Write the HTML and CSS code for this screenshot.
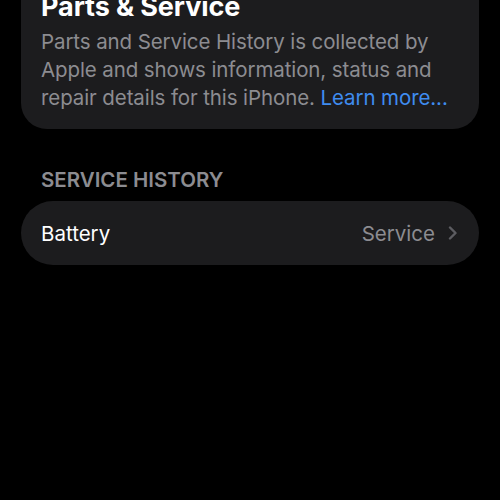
FILE: index.html
```
<!DOCTYPE html>
<html>
<head>
<meta charset="utf-8">
<link rel="stylesheet" href="styles.css">
</head>
<body>
<main class="page">
  <section class="card intro">
    <h1 class="title">Parts &amp; Service</h1>
    <p class="desc">Parts and Service History is collected by Apple and shows information, status and repair details for this iPhone. <span class="link">Learn more...</span></p>
  </section>
  <h2 class="section-header">SERVICE HISTORY</h2>
  <section class="card list">
    <div class="row">
      <span class="row-label">Battery</span>
      <span class="row-value">Service</span>
      <svg class="chevron" width="10" height="14" viewBox="0 0 10 14"><path d="M2 1.5 L7.5 7 L2 12.5" fill="none" stroke="#5c5c61" stroke-width="2.4" stroke-linecap="round" stroke-linejoin="round"/></svg>
    </div>
  </section>
</main>
</body>
</html>
```
FILE: styles.css
```
html, body {
  margin: 0;
  padding: 0;
  background: #000;
  height: 100%;
}
body {
  font-family: Inter, "Liberation Sans", sans-serif;
  color: #fff;
  overflow: hidden;
}
.page {
  padding: 0 21px;
}
.card {
  background: #1c1c1e;
  border-radius: 26px;
}
.intro {
  margin-top: -40px;
  padding: 32px 20px 17px 20px;
}
.title {
  margin: 0;
  font-size: 27px;
  line-height: 30px;
  font-weight: 700;
  letter-spacing: -0.1px;
}
.desc {
  margin: 6px 0 0 0;
  font-size: 20.5px;
  line-height: 28px;
  color: #8c8c91;
  letter-spacing: -0.1px;
}
.link {
  color: #3f8cf0;
}
.section-header {
  margin: 39px 0 0 20px;
  font-size: 20.5px;
  line-height: 24px;
  font-weight: 600;
  color: #8c8c91;
  letter-spacing: 0;
}
.list {
  margin-top: 9px;
  border-radius: 32px;
}
.row {
  display: flex;
  align-items: center;
  height: 64px;
  padding: 0 21px 0 20px;
}
.row-label {
  flex: 1;
  font-size: 20.5px;
  color: #fff;
}
.row-value {
  font-size: 20.5px;
  color: #8c8c91;
  margin-right: 13px;
}
.chevron {
  display: block;
}
```
